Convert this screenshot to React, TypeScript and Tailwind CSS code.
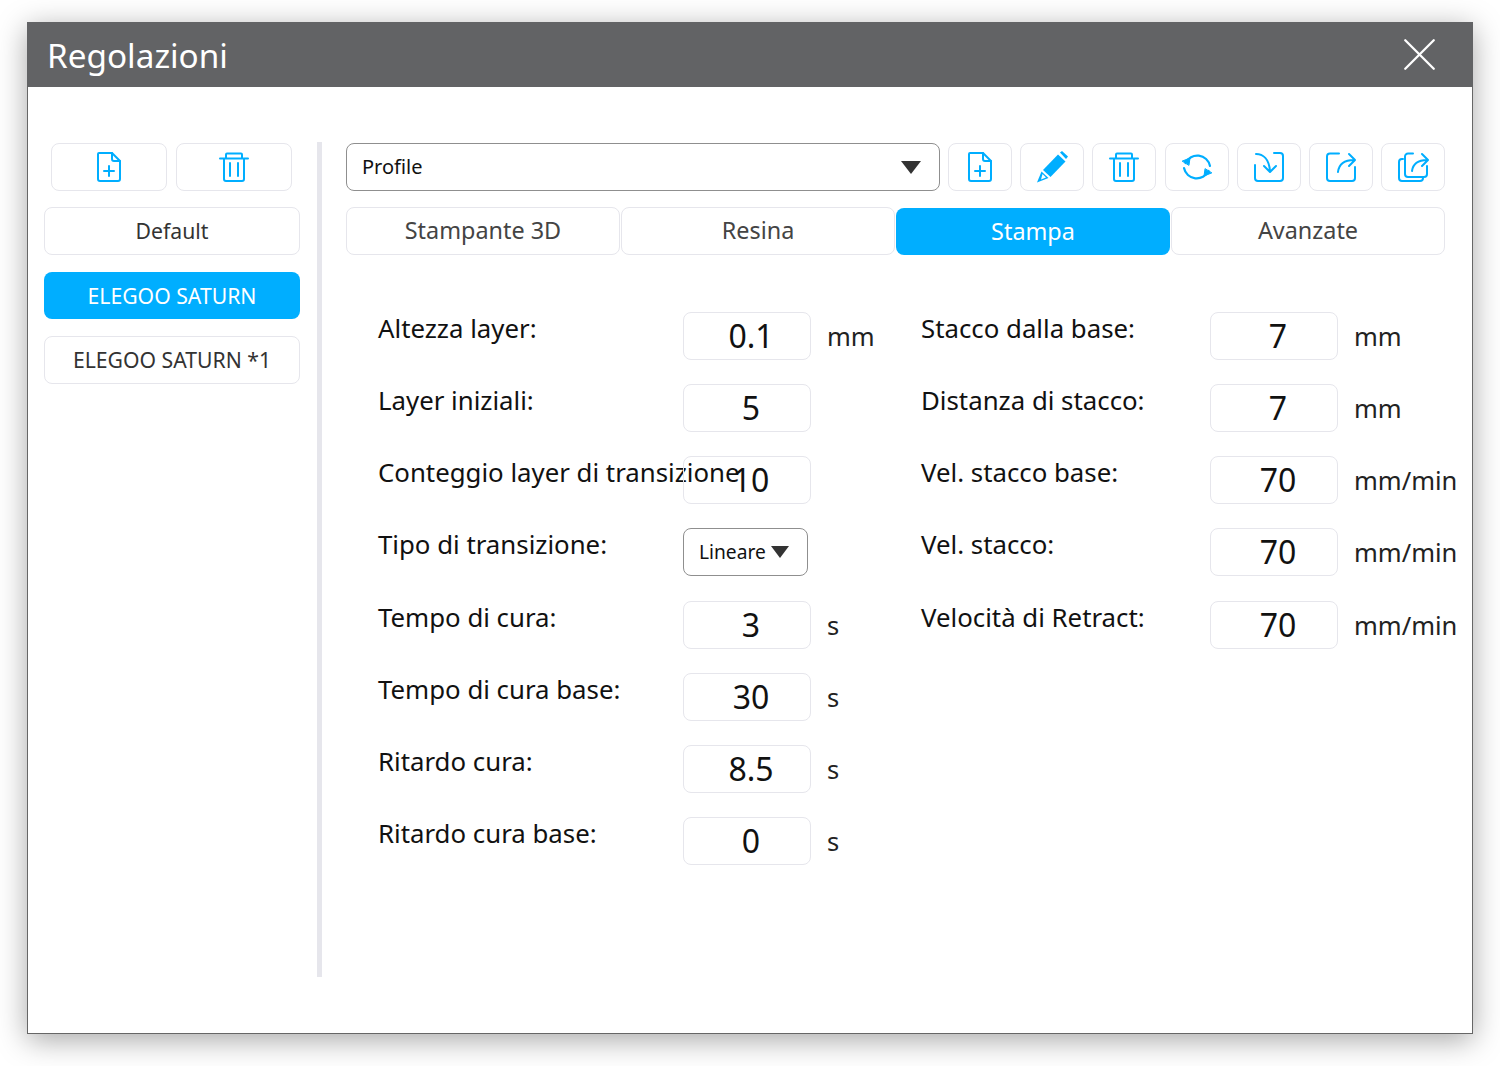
import type { ReactNode } from "react";
import { X } from "lucide-react";

const FONT = "font-['Noto_Sans','Open_Sans',sans-serif]";

const leftRows = [
  { label: "Altezza layer:", value: "0.1", unit: "mm" },
  { label: "Layer iniziali:", value: "5", unit: "" },
  { label: "Conteggio layer di transizione", value: "10", unit: "" },
  { label: "Tipo di transizione:", value: "", unit: "", select: true },
  { label: "Tempo di cura:", value: "3", unit: "s" },
  { label: "Tempo di cura base:", value: "30", unit: "s" },
  { label: "Ritardo cura:", value: "8.5", unit: "s" },
  { label: "Ritardo cura base:", value: "0", unit: "s" },
];

const rightRows = [
  { label: "Stacco dalla base:", value: "7", unit: "mm" },
  { label: "Distanza di stacco:", value: "7", unit: "mm" },
  { label: "Vel. stacco base:", value: "70", unit: "mm/min" },
  { label: "Vel. stacco:", value: "70", unit: "mm/min" },
  { label: "Velocità di Retract:", value: "70", unit: "mm/min" },
];

const tabs = ["Stampante 3D", "Resina", "Stampa", "Avanzate"];

function Icon({ children }: { children: ReactNode }) {
  return (
    <svg
      viewBox="0 0 32 32"
      className="size-8"
      fill="none"
      stroke="#00aeff"
      strokeWidth="2"
      strokeLinecap="round"
      strokeLinejoin="round"
    >
      {children}
    </svg>
  );
}

const NewFile = () => (
  <Icon>
    <path d="M5 3a1 1 0 0 1 1-1h13l8 8v18a2 2 0 0 1-2 2H7a2 2 0 0 1-2-2z" />
    <path d="M19 2v6a2 2 0 0 0 2 2h6M16 15v10M11 20h10" />
  </Icon>
);

const Trash = () => (
  <Icon>
    <path d="M2 7.500h28M8 7.500V3.500a1 1 0 0 1 1-1h14a1 1 0 0 1 1 1v4M6 7.500V28a2 2 0 0 0 2 2h16a2 2 0 0 0 2-2V7.500M12 12v13M20 12v13" />
  </Icon>
);

const Pencil = () => (
  <svg viewBox="0 0 32 32" className="size-8" fill="#00aeff">
    <path d="M24 1.500l2-1.500 6 5.500-2 2.500z" />
    <path d="M22 3.500l7.500 7-15 15.500-7.500-7z" />
    <path d="M5.500 20.500l7 6.500-11.500 4.500z" />
    <path d="M6.500 23l3.500 3.500-5 2z" fill="#fff" />
  </svg>
);

const Refresh = () => (
  <Icon>
    <path d="M4.500 12a13 13 0 0 1 24.500 3M27.500 20a13 13 0 0 1-24.500-3" strokeWidth="2.200" />
    <path d="M1.500 10l7.500-3-1 7zM30.500 22l-7.500 3 1-7z" fill="#00aeff" strokeWidth="1" />
  </Icon>
);

const Import = () => (
  <Icon>
    <path d="M21 2h6a3 3 0 0 1 3 3v22a3 3 0 0 1-3 3H5a3 3 0 0 1-3-3V14" />
    <path d="M3 3c7 0 13 5 14 17M11 15l6 6 6-6" />
  </Icon>
);

const Export = () => (
  <Icon>
    <path d="M14 2.500H5a3 3 0 0 0-3 3V27a3 3 0 0 0 3 3h22a3 3 0 0 0 3-3V16" />
    <path d="M13 21c1-8 6-12 16-12M24 3l6 6-6 6" />
  </Icon>
);

const ExportAll = () => (
  <Icon>
    <path d="M6 8H5a3 3 0 0 0-3 3v16a3 3 0 0 0 3 3h18a3 3 0 0 0 3-3v-1" />
    <path d="M16 2.500h-5a3 3 0 0 0-3 3V23a3 3 0 0 0 3 3h16a3 3 0 0 0 3-3v-8" />
    <path d="M15 20c1-7 6-11 15-11M25 3l6 6-6 6" />
  </Icon>
);

function IconButton({ children, wide }: { children: ReactNode; wide?: boolean }) {
  return (
    <button
      className={`flex h-12 items-center justify-center rounded-lg border-[1.500px] border-[#e6e6ec] bg-white ${wide ? "w-[116px]" : "w-16"}`}
    >
      {children}
    </button>
  );
}

function Field({ value }: { value: string }) {
  return (
    <div className="relative flex h-12 w-32 items-center justify-center rounded-lg border-[1.500px] border-[#e6e6ec] pl-2 text-[32px] leading-none text-[#111]">
      {value}
    </div>
  );
}

function Row({
  label,
  value,
  unit,
  select,
  labelWidth,
}: {
  label: string;
  value: string;
  unit: string;
  select?: boolean;
  labelWidth: string;
}) {
  return (
    <div className="flex h-12 items-start">
      <div className={`${labelWidth} -mt-[2px] shrink-0 whitespace-nowrap text-[25.800px] leading-9 text-[#111]`}>
        {label}
      </div>
      {select ? (
        <div className="flex h-12 w-[125px] items-center rounded-lg border-[1.500px] border-[#8f8f8f] pl-[15px] text-[19.200px] text-[#111]">
          Lineare
          <span className="ml-[5px] h-0 w-0 border-x-[9px] border-t-[12px] border-x-transparent border-t-[#333]" />
        </div>
      ) : (
        <Field value={value} />
      )}
      <div className="ml-4 whitespace-nowrap pt-[6px] text-[25.500px] leading-9 text-[#222]">{unit}</div>
    </div>
  );
}

export default function App() {
  return (
    <div className={`${FONT} h-[1066px] w-[1500px] overflow-hidden bg-white pl-[27px] pt-[22px]`}>
      <div className="h-[1012px] w-[1446px] border border-t-0 border-[#666] bg-white shadow-[0_6px_28px_rgba(0,0,0,0.35)]">
        <header className="-mx-px flex h-[65px] items-center justify-between bg-[#626365] pl-[20px] pr-[25px]">
          <span className="mt-[3px] text-[33.300px] text-white">Regolazioni</span>
          <X className="size-[57px] text-white" strokeWidth={1} />
        </header>

        <div className="flex pl-4 pt-[56px]">
          <aside className="flex h-[834px] w-[256px] shrink-0 flex-col">
            <div className="flex gap-[9px] pl-[7px]">
              <IconButton wide>
                <NewFile />
              </IconButton>
              <IconButton wide>
                <Trash />
              </IconButton>
            </div>
            <button className="mt-4 h-12 rounded-lg border-[1.500px] border-[#e6e6ec] text-[21.200px] text-[#333]">
              Default
            </button>
            <button className="mt-[17px] h-[47px] rounded-lg bg-[#00aeff] text-[21.200px] text-white">
              ELEGOO SATURN
            </button>
            <button className="mt-[17px] h-12 rounded-lg border-[1.500px] border-[#e6e6ec] text-[21.200px] text-[#333]">
              ELEGOO SATURN *1
            </button>
          </aside>

          <div className="-mt-px ml-[17px] h-[835px] w-[5px] shrink-0 bg-[#e6e6ec]" />

          <main className="ml-6 w-[1099px] shrink-0">
            <div className="flex gap-[8.170px]">
              <div className="flex h-12 w-[594px] items-center justify-between rounded-lg border-[1.500px] border-[#8f8f8f] pl-[15px] pr-[18px] text-xl text-[#111]">
                Profile
                <span className="h-0 w-0 border-x-[10px] border-t-[13px] border-x-transparent border-t-[#333]" />
              </div>
              <IconButton><NewFile /></IconButton>
              <IconButton><Pencil /></IconButton>
              <IconButton><Trash /></IconButton>
              <IconButton><Refresh /></IconButton>
              <IconButton><Import /></IconButton>
              <IconButton><Export /></IconButton>
              <IconButton><ExportAll /></IconButton>
            </div>

            <div className="mt-4 grid grid-cols-4 gap-px">
              {tabs.map((t) => (
                <div
                  key={t}
                  className={
                    t === "Stampa"
                      ? "flex h-[47px] items-center justify-center self-end rounded-lg bg-[#00aeff] text-[23.400px] text-white"
                      : "flex h-12 items-center justify-center rounded-lg border-[1.500px] border-[#e6e6ec] text-[23.400px] text-[#444]"
                  }
                >
                  {t}
                </div>
              ))}
            </div>

            <div className="mt-[57px] flex pl-8">
              <div className="flex w-[543px] shrink-0 flex-col gap-[24.150px]">
                {leftRows.map((r) => (
                  <Row key={r.label} {...r} labelWidth="w-[305px]" />
                ))}
              </div>
              <div className="flex flex-col gap-[24.150px]">
                {rightRows.map((r) => (
                  <Row key={r.label} {...r} labelWidth="w-[289px]" />
                ))}
              </div>
            </div>
          </main>
        </div>
      </div>
    </div>
  );
}
